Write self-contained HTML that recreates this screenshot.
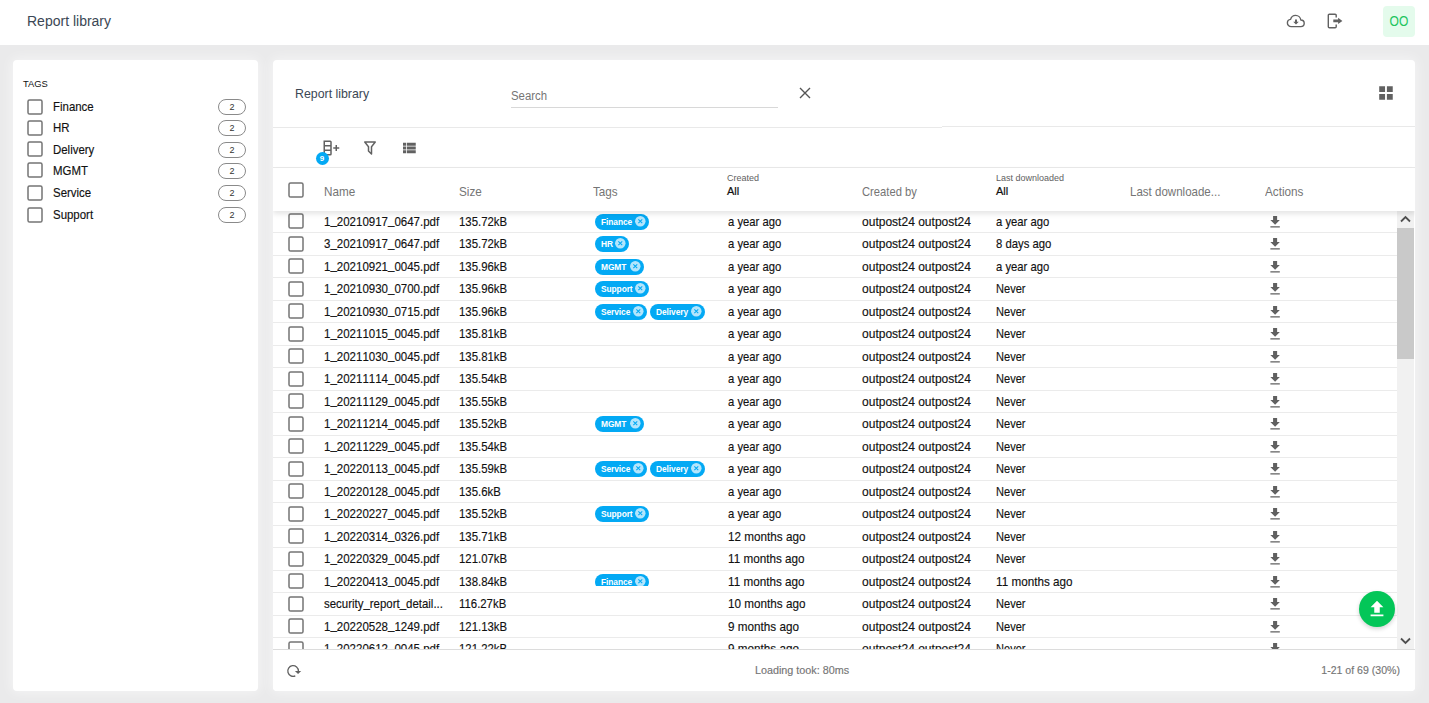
<!DOCTYPE html>
<html><head><meta charset="utf-8"><title>Report library</title>
<style>
*{box-sizing:border-box;margin:0;padding:0}
html,body{width:1429px;height:703px;overflow:hidden}
body{background:#eaeaeb;font-family:"Liberation Sans",sans-serif;position:relative;color:#111}
.top{position:absolute;left:0;top:0;width:1429px;height:45px;background:#fff}
.top .ttl{position:absolute;left:27px;top:13px;font-size:14px;line-height:17px;color:#3b4754;white-space:nowrap}
.avatar{position:absolute;left:1383px;top:6px;width:32px;height:31px;border-radius:4px;background:#e4fbec;color:#22c55e;font-size:14px;line-height:31px;text-align:center}
.avatar span{display:inline-block;transform:scaleX(.86)}
.panel{position:absolute;background:#fff;border-radius:4px;box-shadow:0 0 12px 2px rgba(255,255,255,.5)}
.side{left:13px;top:60px;width:245px;height:631px}
.main{left:273px;top:60px;width:1142px;height:631px;overflow:hidden}
.side h4{position:absolute;left:10px;top:18px;font-size:9.4px;line-height:11px;font-weight:400;color:#111;letter-spacing:0}
.tg{position:absolute;left:0;width:245px;height:21.6px}
svg.cb2{position:absolute;left:13.5px;top:2.8px;width:16px;height:16px}
.tl{-webkit-text-stroke:.15px #111;position:absolute;left:40px;top:3px;font-size:13px;line-height:15px;transform-origin:0 50%;transform:scaleX(.88);white-space:nowrap}
.cnt{position:absolute;left:205px;top:3px;width:28px;height:16px;border:1px solid #8a8a8a;border-radius:8px;font-size:9px;line-height:14.500px;text-align:center;color:#333}
/* main */
.mt{position:absolute;left:22px;top:26px;font-size:13px;line-height:16px;color:#3b4754;transform-origin:0 50%;transform:scaleX(.95);white-space:nowrap}
.search{position:absolute;left:238px;top:28px;width:267px;height:20px;border-bottom:1px solid #d8d8d8;font-size:12px;line-height:16px;color:#757575}
.search span{display:inline-block;transform-origin:0 50%;transform:scaleX(.95)}
.hr1{position:absolute;left:0;top:67px;width:669px;height:1px;background:#e9e9e9}
.hr1b{position:absolute;left:669px;top:66px;width:473px;height:1px;background:#e9e9e9}
.hr2{position:absolute;left:0;top:107px;width:1142px;height:1px;background:#e9e9e9}
svg.ic{position:absolute;fill:#616161}
.badge{position:absolute;left:43px;top:92px;width:13px;height:13px;border-radius:50%;background:#03a9f4;color:#fff;font-size:8px;font-weight:700;line-height:13.400px;text-align:center;text-indent:-1px}
.head{position:absolute;left:0;top:108px;width:1142px;height:43px;background:#fff;z-index:3;box-shadow:0 3px 5px rgba(0,0,0,.1)}
.head .h{position:absolute;top:16px;font-size:13px;line-height:16px;color:#757575;transform-origin:0 50%;transform:scaleX(.9);white-space:nowrap}
.head .sm{position:absolute;top:5px;font-size:9px;line-height:11px;color:#616161;white-space:nowrap}
.head .all{position:absolute;top:17px;font-size:11px;line-height:13px;color:#111;white-space:nowrap;-webkit-text-stroke:.2px #111}
svg.cbh{position:absolute;left:14.6px;top:13.7px;width:16px;height:16px}
.body{position:absolute;left:0;top:150px;width:1142px;height:440px;overflow:hidden;border-bottom:1px solid #dcdcdc;padding-top:.5px}
.row{position:relative;height:22.5px;border-bottom:1px solid #ebebeb;width:1124px}
.row svg.cb{position:absolute;left:14.6px;top:2.750px;width:16px;height:16px}
.row .c{-webkit-text-stroke:.15px #111;position:absolute;top:3.400px;font-size:13px;line-height:16px;white-space:nowrap;transform-origin:0 50%;color:#111}
.c1{left:51px;transform:scaleX(.885);font-kerning:none}
.c1 u{text-decoration:none;position:relative;top:-1.500px}
.c2{left:186px;transform:scaleX(.875)}
.c3{left:322px;top:3.400px !important;transform:none}
.c4{left:454.600px;transform:scaleX(.9)}
.c5{left:589px;transform:scaleX(.925)}
.c6{left:723px;transform:scaleX(.9)}
.chip{display:inline-block;position:relative;height:16px;border-radius:8px;background:#03a9f4;margin-right:3px;vertical-align:top}
.chip b{-webkit-text-stroke:0;position:absolute;left:6px;top:0;font-size:9.600px;line-height:15px;color:#fff;transform-origin:0 50%;transform:scaleX(.875);letter-spacing:-.1px}
.chip svg.cx{position:absolute;right:2.400px;top:1.100px;width:12.600px;height:12.600px}
.row.clip .c3{height:12px;overflow:hidden}
svg.dl{position:absolute;left:994px;top:3.350px;width:16.200px;height:16.200px;fill:#606060}
.sb{position:absolute;left:1124px;top:151px;width:17px;height:438px;background:#f1f1f1;z-index:2}
.sb .th{position:absolute;left:0;top:17px;width:17px;height:131px;background:#c9c9c9}
.foot{position:absolute;left:0;top:590px;width:1142px;height:41px;background:#fff}
.foot .ld{-webkit-text-stroke:.15px #757575;position:absolute;left:0;width:1142px;top:14px;text-align:center;font-size:10.800px;line-height:13px;color:#757575;padding-right:84px}
.foot .pg{-webkit-text-stroke:.15px #757575;position:absolute;right:15px;top:14px;font-size:11px;line-height:13px;color:#757575;transform-origin:100% 50%;transform:scaleX(.96);white-space:nowrap}
.fab{position:absolute;left:1086px;top:531px;width:36px;height:36px;border-radius:50%;background:#03c658;z-index:4;box-shadow:0 2px 4px rgba(0,0,0,.18)}
.fab svg{position:absolute;left:7px;top:7px;width:22px;height:22px;fill:#fff}
</style></head><body>
<div class="top">
  <div class="ttl">Report library</div>
  <svg style="position:absolute;left:1286px;top:13px" width="20" height="16" viewBox="0 0 20 16"><path d="M5.2 13.6C3 13.6 1.4 12 1.4 10c0-1.9 1.4-3.400 3.200-3.600C5.200 4.100 7.200 2.400 9.600 2.400c2.700 0 4.900 2 5.200 4.600 1.900.1 3.400 1.500 3.400 3.300 0 1.800-1.500 3.300-3.400 3.300z" fill="none" stroke="#616161" stroke-width="1.4" stroke-linejoin="round"/><path d="M9 6.500h2v2.300h1.800L10 11.600 7.200 8.800H9z" fill="#616161"/></svg>
  <svg style="position:absolute;left:1326px;top:12px" width="18" height="18" viewBox="0 0 18 18"><path d="M10.200 5.500V3.300c0-.6-.5-1.100-1.100-1.100H3.400c-.6 0-1.100.5-1.100 1.100v11.400c0 .6.500 1.100 1.100 1.100h5.700c.6 0 1.100-.5 1.100-1.100v-2.200" fill="none" stroke="#616161" stroke-width="1.400"/><path d="M7.300 7.500h4.800V5.700l4.300 3.200-4.300 3.200v-1.800H7.300z" fill="#616161"/></svg>
  <div class="avatar"><span>OO</span></div>
</div>
<div class="panel side">
  <h4>TAGS</h4>
<div class="tg" style="top:36.0px"><svg class="cb2" viewBox="0 0 16 16"><rect x="1" y="1" width="14" height="14" rx="1.600" fill="none" stroke="#747474" stroke-width="1.500"/></svg><span class="tl">Finance</span><span class="cnt">2</span></div>
<div class="tg" style="top:57.0px"><svg class="cb2" viewBox="0 0 16 16"><rect x="1" y="1" width="14" height="14" rx="1.600" fill="none" stroke="#747474" stroke-width="1.500"/></svg><span class="tl">HR</span><span class="cnt">2</span></div>
<div class="tg" style="top:78.7px"><svg class="cb2" viewBox="0 0 16 16"><rect x="1" y="1" width="14" height="14" rx="1.600" fill="none" stroke="#747474" stroke-width="1.500"/></svg><span class="tl">Delivery</span><span class="cnt">2</span></div>
<div class="tg" style="top:99.7px"><svg class="cb2" viewBox="0 0 16 16"><rect x="1" y="1" width="14" height="14" rx="1.600" fill="none" stroke="#747474" stroke-width="1.500"/></svg><span class="tl">MGMT</span><span class="cnt">2</span></div>
<div class="tg" style="top:121.9px"><svg class="cb2" viewBox="0 0 16 16"><rect x="1" y="1" width="14" height="14" rx="1.600" fill="none" stroke="#747474" stroke-width="1.500"/></svg><span class="tl">Service</span><span class="cnt">2</span></div>
<div class="tg" style="top:144.1px"><svg class="cb2" viewBox="0 0 16 16"><rect x="1" y="1" width="14" height="14" rx="1.600" fill="none" stroke="#747474" stroke-width="1.500"/></svg><span class="tl">Support</span><span class="cnt">2</span></div>
</div>
<div class="panel main">
  <div class="mt">Report library</div>
  <div class="search"><span>Search</span></div>
  <svg class="ic" style="left:526px;top:27px" width="12" height="12" viewBox="0 0 12 12"><path d="M1 1L11 11M11 1L1 11" stroke="#555" stroke-width="1.400" fill="none"/></svg>
  <svg class="ic" style="left:1106px;top:26px" width="15" height="15" viewBox="0 0 15 15"><path d="M.2 .2h5.850v5.850h-5.850zM7.900 .2h5.850v5.850h-5.850zM.2 7.900h5.850v5.850h-5.850zM7.900 7.900h5.850v5.850h-5.850z"/></svg>
  <div class="hr1"></div><div class="hr1b"></div>
  <svg class="ic" style="left:49px;top:79px" width="18" height="18" viewBox="0 0 24 24"><path d="M11,2A2,2 0 0,1 13,4V20A2,2 0 0,1 11,22H2V2H11M4,10V14H11V10H4M4,16V20H11V16H4M4,4V8H11V4H4M15,11H18V8H20V11H23V13H20V16H18V13H15V11Z"/></svg>
  <div class="badge">9</div>
  <svg class="ic" style="left:88px;top:79px" width="18" height="18" viewBox="0 0 24 24"><path d="M15,19.880C15.040,20.180 14.940,20.500 14.710,20.710C14.320,21.100 13.690,21.100 13.300,20.710L9.290,16.700C9.060,16.470 8.960,16.160 9,15.870V10.750L4.210,4.620C3.870,4.190 3.950,3.560 4.380,3.220C4.570,3.080 4.780,3 5,3V3H19V3C19.220,3 19.430,3.080 19.620,3.220C20.050,3.560 20.130,4.190 19.790,4.620L15,10.750V19.880M7.040,5L11,10.060V15.580L13,17.580V10.050L16.960,5H7.040Z"/></svg>
  <svg class="ic" style="left:127px;top:79px" width="18" height="18" viewBox="0 0 24 24"><path d="M9,5V9H21V5M9,19H21V15H9M9,14H21V10H9M4,9H8V5H4M4,19H8V15H4M4,14H8V10H4V14Z"/></svg>
  <div class="hr2"></div>
  <div class="head">
    <svg class="cbh" viewBox="0 0 16 16"><rect x="1" y="1" width="14" height="14" rx="1.600" fill="none" stroke="#747474" stroke-width="1.500"/></svg>
    <span class="h" style="left:51px">Name</span>
    <span class="h" style="left:186px">Size</span>
    <span class="h" style="left:320px">Tags</span>
    <span class="sm" style="left:454px">Created</span><span class="all" style="left:454px">All</span>
    <span class="h" style="left:589px;transform:scaleX(.862)">Created by</span>
    <span class="sm" style="left:723px">Last downloaded</span><span class="all" style="left:723px">All</span>
    <span class="h" style="left:857px;transform:scaleX(.887)">Last downloade...</span>
    <span class="h" style="left:992px">Actions</span>
  </div>
  <div class="body">
<div class="row"><svg class="cb" viewBox="0 0 16 16"><rect x="1" y="1" width="14" height="14" rx="1.600" fill="none" stroke="#747474" stroke-width="1.500"/></svg><span class="c c1">1<u>_</u>20210917<u>_</u>0647.pdf</span><span class="c c2">135.72kB</span><span class="c c3"><span class="chip" style="width:54px"><b>Finance</b><svg class="cx" viewBox="0 0 24 24"><circle cx="12" cy="12" r="10" fill="#b3e5fc"/><path d="M8.300 8.300L15.700 15.700M15.700 8.300L8.300 15.700" stroke="#03a9f4" stroke-width="2" fill="none"/></svg></span></span><span class="c c4" style="transform:scaleX(.865)">a year ago</span><span class="c c5">outpost24 outpost24</span><span class="c c6" style="transform:scaleX(.865)">a year ago</span><svg class="dl" viewBox="0 0 24 24"><path d="M5,20H19V18H5M19,9H15V3H9V9H5L12,16L19,9Z"/></svg></div>
<div class="row"><svg class="cb" viewBox="0 0 16 16"><rect x="1" y="1" width="14" height="14" rx="1.600" fill="none" stroke="#747474" stroke-width="1.500"/></svg><span class="c c1">3<u>_</u>20210917<u>_</u>0647.pdf</span><span class="c c2">135.72kB</span><span class="c c3"><span class="chip" style="width:34px"><b>HR</b><svg class="cx" viewBox="0 0 24 24"><circle cx="12" cy="12" r="10" fill="#b3e5fc"/><path d="M8.300 8.300L15.700 15.700M15.700 8.300L8.300 15.700" stroke="#03a9f4" stroke-width="2" fill="none"/></svg></span></span><span class="c c4" style="transform:scaleX(.865)">a year ago</span><span class="c c5">outpost24 outpost24</span><span class="c c6" style="transform:scaleX(.87)">8 days ago</span><svg class="dl" viewBox="0 0 24 24"><path d="M5,20H19V18H5M19,9H15V3H9V9H5L12,16L19,9Z"/></svg></div>
<div class="row"><svg class="cb" viewBox="0 0 16 16"><rect x="1" y="1" width="14" height="14" rx="1.600" fill="none" stroke="#747474" stroke-width="1.500"/></svg><span class="c c1">1<u>_</u>20210921<u>_</u>0045.pdf</span><span class="c c2">135.96kB</span><span class="c c3"><span class="chip" style="width:49px"><b>MGMT</b><svg class="cx" viewBox="0 0 24 24"><circle cx="12" cy="12" r="10" fill="#b3e5fc"/><path d="M8.300 8.300L15.700 15.700M15.700 8.300L8.300 15.700" stroke="#03a9f4" stroke-width="2" fill="none"/></svg></span></span><span class="c c4" style="transform:scaleX(.865)">a year ago</span><span class="c c5">outpost24 outpost24</span><span class="c c6" style="transform:scaleX(.865)">a year ago</span><svg class="dl" viewBox="0 0 24 24"><path d="M5,20H19V18H5M19,9H15V3H9V9H5L12,16L19,9Z"/></svg></div>
<div class="row"><svg class="cb" viewBox="0 0 16 16"><rect x="1" y="1" width="14" height="14" rx="1.600" fill="none" stroke="#747474" stroke-width="1.500"/></svg><span class="c c1">1<u>_</u>20210930<u>_</u>0700.pdf</span><span class="c c2">135.96kB</span><span class="c c3"><span class="chip" style="width:54px"><b>Support</b><svg class="cx" viewBox="0 0 24 24"><circle cx="12" cy="12" r="10" fill="#b3e5fc"/><path d="M8.300 8.300L15.700 15.700M15.700 8.300L8.300 15.700" stroke="#03a9f4" stroke-width="2" fill="none"/></svg></span></span><span class="c c4" style="transform:scaleX(.865)">a year ago</span><span class="c c5">outpost24 outpost24</span><span class="c c6" style="transform:scaleX(.85)">Never</span><svg class="dl" viewBox="0 0 24 24"><path d="M5,20H19V18H5M19,9H15V3H9V9H5L12,16L19,9Z"/></svg></div>
<div class="row"><svg class="cb" viewBox="0 0 16 16"><rect x="1" y="1" width="14" height="14" rx="1.600" fill="none" stroke="#747474" stroke-width="1.500"/></svg><span class="c c1">1<u>_</u>20210930<u>_</u>0715.pdf</span><span class="c c2">135.96kB</span><span class="c c3"><span class="chip" style="width:52px"><b>Service</b><svg class="cx" viewBox="0 0 24 24"><circle cx="12" cy="12" r="10" fill="#b3e5fc"/><path d="M8.300 8.300L15.700 15.700M15.700 8.300L8.300 15.700" stroke="#03a9f4" stroke-width="2" fill="none"/></svg></span><span class="chip" style="width:55px"><b>Delivery</b><svg class="cx" viewBox="0 0 24 24"><circle cx="12" cy="12" r="10" fill="#b3e5fc"/><path d="M8.300 8.300L15.700 15.700M15.700 8.300L8.300 15.700" stroke="#03a9f4" stroke-width="2" fill="none"/></svg></span></span><span class="c c4" style="transform:scaleX(.865)">a year ago</span><span class="c c5">outpost24 outpost24</span><span class="c c6" style="transform:scaleX(.85)">Never</span><svg class="dl" viewBox="0 0 24 24"><path d="M5,20H19V18H5M19,9H15V3H9V9H5L12,16L19,9Z"/></svg></div>
<div class="row"><svg class="cb" viewBox="0 0 16 16"><rect x="1" y="1" width="14" height="14" rx="1.600" fill="none" stroke="#747474" stroke-width="1.500"/></svg><span class="c c1">1<u>_</u>20211015<u>_</u>0045.pdf</span><span class="c c2">135.81kB</span><span class="c c3"></span><span class="c c4" style="transform:scaleX(.865)">a year ago</span><span class="c c5">outpost24 outpost24</span><span class="c c6" style="transform:scaleX(.85)">Never</span><svg class="dl" viewBox="0 0 24 24"><path d="M5,20H19V18H5M19,9H15V3H9V9H5L12,16L19,9Z"/></svg></div>
<div class="row"><svg class="cb" viewBox="0 0 16 16"><rect x="1" y="1" width="14" height="14" rx="1.600" fill="none" stroke="#747474" stroke-width="1.500"/></svg><span class="c c1">1<u>_</u>20211030<u>_</u>0045.pdf</span><span class="c c2">135.81kB</span><span class="c c3"></span><span class="c c4" style="transform:scaleX(.865)">a year ago</span><span class="c c5">outpost24 outpost24</span><span class="c c6" style="transform:scaleX(.85)">Never</span><svg class="dl" viewBox="0 0 24 24"><path d="M5,20H19V18H5M19,9H15V3H9V9H5L12,16L19,9Z"/></svg></div>
<div class="row"><svg class="cb" viewBox="0 0 16 16"><rect x="1" y="1" width="14" height="14" rx="1.600" fill="none" stroke="#747474" stroke-width="1.500"/></svg><span class="c c1">1<u>_</u>20211114<u>_</u>0045.pdf</span><span class="c c2">135.54kB</span><span class="c c3"></span><span class="c c4" style="transform:scaleX(.865)">a year ago</span><span class="c c5">outpost24 outpost24</span><span class="c c6" style="transform:scaleX(.85)">Never</span><svg class="dl" viewBox="0 0 24 24"><path d="M5,20H19V18H5M19,9H15V3H9V9H5L12,16L19,9Z"/></svg></div>
<div class="row"><svg class="cb" viewBox="0 0 16 16"><rect x="1" y="1" width="14" height="14" rx="1.600" fill="none" stroke="#747474" stroke-width="1.500"/></svg><span class="c c1">1<u>_</u>20211129<u>_</u>0045.pdf</span><span class="c c2">135.55kB</span><span class="c c3"></span><span class="c c4" style="transform:scaleX(.865)">a year ago</span><span class="c c5">outpost24 outpost24</span><span class="c c6" style="transform:scaleX(.85)">Never</span><svg class="dl" viewBox="0 0 24 24"><path d="M5,20H19V18H5M19,9H15V3H9V9H5L12,16L19,9Z"/></svg></div>
<div class="row"><svg class="cb" viewBox="0 0 16 16"><rect x="1" y="1" width="14" height="14" rx="1.600" fill="none" stroke="#747474" stroke-width="1.500"/></svg><span class="c c1">1<u>_</u>20211214<u>_</u>0045.pdf</span><span class="c c2">135.52kB</span><span class="c c3"><span class="chip" style="width:49px"><b>MGMT</b><svg class="cx" viewBox="0 0 24 24"><circle cx="12" cy="12" r="10" fill="#b3e5fc"/><path d="M8.300 8.300L15.700 15.700M15.700 8.300L8.300 15.700" stroke="#03a9f4" stroke-width="2" fill="none"/></svg></span></span><span class="c c4" style="transform:scaleX(.865)">a year ago</span><span class="c c5">outpost24 outpost24</span><span class="c c6" style="transform:scaleX(.85)">Never</span><svg class="dl" viewBox="0 0 24 24"><path d="M5,20H19V18H5M19,9H15V3H9V9H5L12,16L19,9Z"/></svg></div>
<div class="row"><svg class="cb" viewBox="0 0 16 16"><rect x="1" y="1" width="14" height="14" rx="1.600" fill="none" stroke="#747474" stroke-width="1.500"/></svg><span class="c c1">1<u>_</u>20211229<u>_</u>0045.pdf</span><span class="c c2">135.54kB</span><span class="c c3"></span><span class="c c4" style="transform:scaleX(.865)">a year ago</span><span class="c c5">outpost24 outpost24</span><span class="c c6" style="transform:scaleX(.85)">Never</span><svg class="dl" viewBox="0 0 24 24"><path d="M5,20H19V18H5M19,9H15V3H9V9H5L12,16L19,9Z"/></svg></div>
<div class="row"><svg class="cb" viewBox="0 0 16 16"><rect x="1" y="1" width="14" height="14" rx="1.600" fill="none" stroke="#747474" stroke-width="1.500"/></svg><span class="c c1">1<u>_</u>20220113<u>_</u>0045.pdf</span><span class="c c2">135.59kB</span><span class="c c3"><span class="chip" style="width:52px"><b>Service</b><svg class="cx" viewBox="0 0 24 24"><circle cx="12" cy="12" r="10" fill="#b3e5fc"/><path d="M8.300 8.300L15.700 15.700M15.700 8.300L8.300 15.700" stroke="#03a9f4" stroke-width="2" fill="none"/></svg></span><span class="chip" style="width:55px"><b>Delivery</b><svg class="cx" viewBox="0 0 24 24"><circle cx="12" cy="12" r="10" fill="#b3e5fc"/><path d="M8.300 8.300L15.700 15.700M15.700 8.300L8.300 15.700" stroke="#03a9f4" stroke-width="2" fill="none"/></svg></span></span><span class="c c4" style="transform:scaleX(.865)">a year ago</span><span class="c c5">outpost24 outpost24</span><span class="c c6" style="transform:scaleX(.85)">Never</span><svg class="dl" viewBox="0 0 24 24"><path d="M5,20H19V18H5M19,9H15V3H9V9H5L12,16L19,9Z"/></svg></div>
<div class="row"><svg class="cb" viewBox="0 0 16 16"><rect x="1" y="1" width="14" height="14" rx="1.600" fill="none" stroke="#747474" stroke-width="1.500"/></svg><span class="c c1">1<u>_</u>20220128<u>_</u>0045.pdf</span><span class="c c2">135.6kB</span><span class="c c3"></span><span class="c c4" style="transform:scaleX(.865)">a year ago</span><span class="c c5">outpost24 outpost24</span><span class="c c6" style="transform:scaleX(.85)">Never</span><svg class="dl" viewBox="0 0 24 24"><path d="M5,20H19V18H5M19,9H15V3H9V9H5L12,16L19,9Z"/></svg></div>
<div class="row"><svg class="cb" viewBox="0 0 16 16"><rect x="1" y="1" width="14" height="14" rx="1.600" fill="none" stroke="#747474" stroke-width="1.500"/></svg><span class="c c1">1<u>_</u>20220227<u>_</u>0045.pdf</span><span class="c c2">135.52kB</span><span class="c c3"><span class="chip" style="width:54px"><b>Support</b><svg class="cx" viewBox="0 0 24 24"><circle cx="12" cy="12" r="10" fill="#b3e5fc"/><path d="M8.300 8.300L15.700 15.700M15.700 8.300L8.300 15.700" stroke="#03a9f4" stroke-width="2" fill="none"/></svg></span></span><span class="c c4" style="transform:scaleX(.865)">a year ago</span><span class="c c5">outpost24 outpost24</span><span class="c c6" style="transform:scaleX(.85)">Never</span><svg class="dl" viewBox="0 0 24 24"><path d="M5,20H19V18H5M19,9H15V3H9V9H5L12,16L19,9Z"/></svg></div>
<div class="row"><svg class="cb" viewBox="0 0 16 16"><rect x="1" y="1" width="14" height="14" rx="1.600" fill="none" stroke="#747474" stroke-width="1.500"/></svg><span class="c c1">1<u>_</u>20220314<u>_</u>0326.pdf</span><span class="c c2">135.71kB</span><span class="c c3"></span><span class="c c4">12 months ago</span><span class="c c5">outpost24 outpost24</span><span class="c c6" style="transform:scaleX(.85)">Never</span><svg class="dl" viewBox="0 0 24 24"><path d="M5,20H19V18H5M19,9H15V3H9V9H5L12,16L19,9Z"/></svg></div>
<div class="row"><svg class="cb" viewBox="0 0 16 16"><rect x="1" y="1" width="14" height="14" rx="1.600" fill="none" stroke="#747474" stroke-width="1.500"/></svg><span class="c c1">1<u>_</u>20220329<u>_</u>0045.pdf</span><span class="c c2">121.07kB</span><span class="c c3"></span><span class="c c4">11 months ago</span><span class="c c5">outpost24 outpost24</span><span class="c c6" style="transform:scaleX(.85)">Never</span><svg class="dl" viewBox="0 0 24 24"><path d="M5,20H19V18H5M19,9H15V3H9V9H5L12,16L19,9Z"/></svg></div>
<div class="row clip"><svg class="cb" viewBox="0 0 16 16"><rect x="1" y="1" width="14" height="14" rx="1.600" fill="none" stroke="#747474" stroke-width="1.500"/></svg><span class="c c1">1<u>_</u>20220413<u>_</u>0045.pdf</span><span class="c c2">138.84kB</span><span class="c c3"><span class="chip" style="width:54px"><b>Finance</b><svg class="cx" viewBox="0 0 24 24"><circle cx="12" cy="12" r="10" fill="#b3e5fc"/><path d="M8.300 8.300L15.700 15.700M15.700 8.300L8.300 15.700" stroke="#03a9f4" stroke-width="2" fill="none"/></svg></span></span><span class="c c4">11 months ago</span><span class="c c5">outpost24 outpost24</span><span class="c c6">11 months ago</span><svg class="dl" viewBox="0 0 24 24"><path d="M5,20H19V18H5M19,9H15V3H9V9H5L12,16L19,9Z"/></svg></div>
<div class="row"><svg class="cb" viewBox="0 0 16 16"><rect x="1" y="1" width="14" height="14" rx="1.600" fill="none" stroke="#747474" stroke-width="1.500"/></svg><span class="c c1" style="transform:scaleX(.88)">security<u>_</u>report<u>_</u>detail...</span><span class="c c2">116.27kB</span><span class="c c3"></span><span class="c c4">10 months ago</span><span class="c c5">outpost24 outpost24</span><span class="c c6" style="transform:scaleX(.85)">Never</span><svg class="dl" viewBox="0 0 24 24"><path d="M5,20H19V18H5M19,9H15V3H9V9H5L12,16L19,9Z"/></svg></div>
<div class="row"><svg class="cb" viewBox="0 0 16 16"><rect x="1" y="1" width="14" height="14" rx="1.600" fill="none" stroke="#747474" stroke-width="1.500"/></svg><span class="c c1">1<u>_</u>20220528<u>_</u>1249.pdf</span><span class="c c2">121.13kB</span><span class="c c3"></span><span class="c c4">9 months ago</span><span class="c c5">outpost24 outpost24</span><span class="c c6" style="transform:scaleX(.85)">Never</span><svg class="dl" viewBox="0 0 24 24"><path d="M5,20H19V18H5M19,9H15V3H9V9H5L12,16L19,9Z"/></svg></div>
<div class="row"><svg class="cb" viewBox="0 0 16 16"><rect x="1" y="1" width="14" height="14" rx="1.600" fill="none" stroke="#747474" stroke-width="1.500"/></svg><span class="c c1">1<u>_</u>20220612<u>_</u>0045.pdf</span><span class="c c2">121.22kB</span><span class="c c3"></span><span class="c c4">9 months ago</span><span class="c c5">outpost24 outpost24</span><span class="c c6" style="transform:scaleX(.85)">Never</span><svg class="dl" viewBox="0 0 24 24"><path d="M5,20H19V18H5M19,9H15V3H9V9H5L12,16L19,9Z"/></svg></div>
  </div>
  <div class="sb"><div class="th"></div>
    <svg style="position:absolute;left:3px;top:4px" width="11" height="8" viewBox="0 0 11 8"><path d="M1 6.500L5.500 2 10 6.500" fill="none" stroke="#505050" stroke-width="1.800"/></svg>
    <svg style="position:absolute;left:3px;bottom:4px" width="11" height="8" viewBox="0 0 11 8"><path d="M1 1.500L5.500 6 10 1.500" fill="none" stroke="#505050" stroke-width="1.800"/></svg>
  </div>
  <div class="fab"><svg viewBox="0 0 24 24"><path d="M9,16V10H5L12,3L19,10H15V16H9M5,20V18H19V20H5Z"/></svg></div>
  <div class="foot">
    <svg style="position:absolute;left:12px;top:13px" width="18" height="16" viewBox="0 0 18 16"><path d="M13.400 8A5.300 5.300 0 1 0 10.300 12.800" fill="none" stroke="#616161" stroke-width="1.300"/><path d="M9.900 8H16.200L13.050 11.100z" fill="#616161"/></svg>
    <div class="ld">Loading took: 80ms</div>
    <div class="pg">1-21 of 69 (30%)</div>
  </div>
</div>
</body></html>
